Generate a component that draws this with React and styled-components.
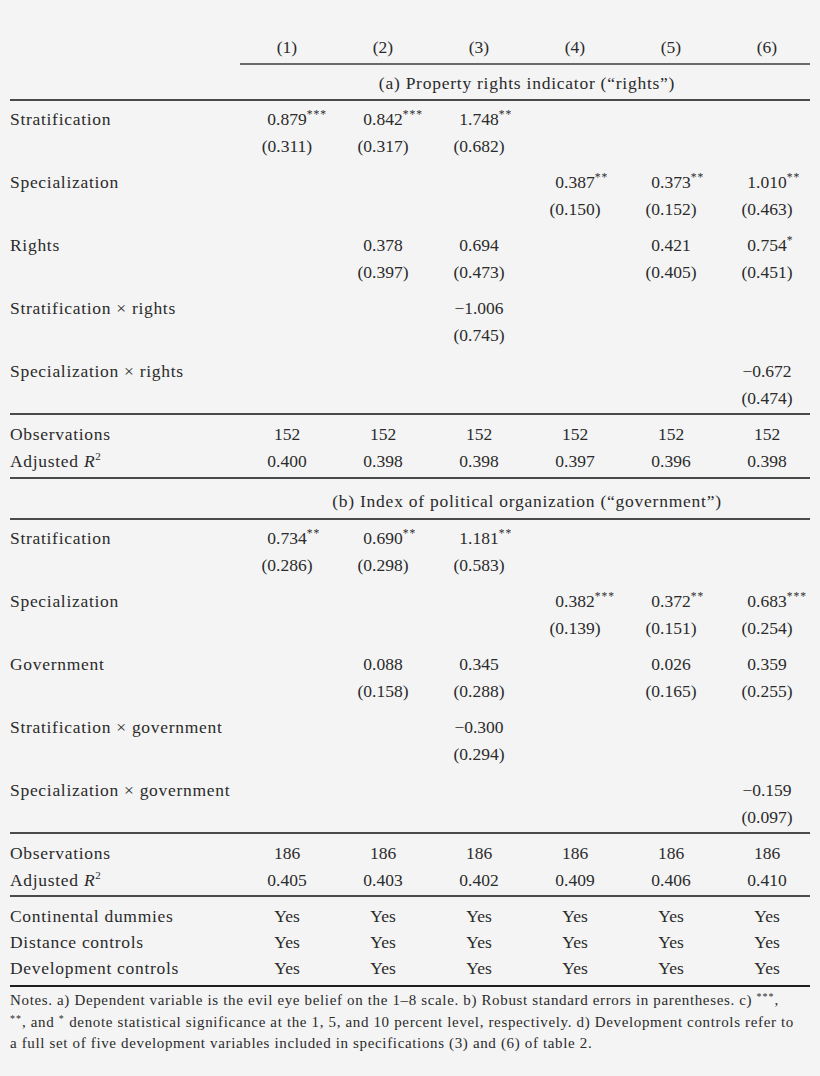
import React from "react";
import styled, { createGlobalStyle } from "styled-components";

const Global = createGlobalStyle`
  html, body { margin: 0; padding: 0; background: #f4f4f4; }
`;

const Page = styled.div`
  box-sizing: border-box;
  min-height: 1076px;
  width: 820px;
  padding: 34px 10px 0 10px;
  background: #f4f4f4;
  color: #2b2b2b;
  font-family: "Liberation Serif", "Times New Roman", serif;
  font-size: 17.5px;
`;

const Table = styled.div`
  width: 800px;
`;

const Grid = styled.div`
  display: grid;
  grid-template-columns: 229px repeat(6, 96px);
  height: ${(p) => p.$h || 27}px;
  line-height: ${(p) => p.$h || 27}px;
  white-space: nowrap;
`;

const Label = styled.div`
  letter-spacing: 0.7px;
`;

const Cell = styled.div`
  text-align: center;
`;

const Caption = styled.div`
  grid-column: 2 / -1;
  text-align: center;
  letter-spacing: 0.75px;
`;

const Rule = styled.div`
  height: 2px;
  margin-top: ${(p) => p.$mt || 0}px;
  margin-left: ${(p) => p.$indent || 0}px;
  background: ${(p) => (p.$dark ? "#1e1e1e" : p.$light ? "#6a6a6a" : "#4a4a4a")};
`;

const Section = styled.div`
  padding-top: ${(p) => p.$pt || 0}px;
`;

const Group = styled.div`
  & + & {
    margin-top: 9px;
  }
`;

const Stars = styled.span`
  display: inline-block;
  width: 0;
  overflow: visible;
  white-space: nowrap;
  font-size: 11.5px;
  letter-spacing: 1px;
  vertical-align: 7px;
  line-height: 1;
`;

const Italic = styled.span`
  font-style: italic;
`;

const Sup = styled.sup`
  font-size: 11px;
  line-height: 0;
  vertical-align: 7px;
`;

const Notes = styled.div`
  margin-top: 3px;
  font-size: 15px;
  line-height: 21.5px;
  letter-spacing: 0.65px;
  white-space: nowrap;
`;

const NoteLine = styled.div``;

const NoteStars = styled.span`
  font-size: 10px;
  letter-spacing: 1px;
  vertical-align: 5px;
  line-height: 0;
`;

function Value({ v }) {
  if (!v) return <Cell />;
  const m = v.match(/^([^*]*)(\**)$/);
  return (
    <Cell>
      {m[1]}
      {m[2] ? <Stars>{m[2]}</Stars> : null}
    </Cell>
  );
}

function Row({ label, values, h }) {
  return (
    <Grid $h={h}>
      <Label>{label}</Label>
      {values.map((v, i) => (
        <Value key={i} v={v} />
      ))}
    </Grid>
  );
}

function CoefGroup({ label, coef, se }) {
  return (
    <Group>
      <Row label={label} values={coef} />
      <Row label="" values={se} />
    </Group>
  );
}

const panelA = [
  {
    label: "Stratification",
    coef: ["0.879***", "0.842***", "1.748**", "", "", ""],
    se: ["(0.311)", "(0.317)", "(0.682)", "", "", ""],
  },
  {
    label: "Specialization",
    coef: ["", "", "", "0.387**", "0.373**", "1.010**"],
    se: ["", "", "", "(0.150)", "(0.152)", "(0.463)"],
  },
  {
    label: "Rights",
    coef: ["", "0.378", "0.694", "", "0.421", "0.754*"],
    se: ["", "(0.397)", "(0.473)", "", "(0.405)", "(0.451)"],
  },
  {
    label: "Stratification × rights",
    coef: ["", "", "−1.006", "", "", ""],
    se: ["", "", "(0.745)", "", "", ""],
  },
  {
    label: "Specialization × rights",
    coef: ["", "", "", "", "", "−0.672"],
    se: ["", "", "", "", "", "(0.474)"],
  },
];

const panelB = [
  {
    label: "Stratification",
    coef: ["0.734**", "0.690**", "1.181**", "", "", ""],
    se: ["(0.286)", "(0.298)", "(0.583)", "", "", ""],
  },
  {
    label: "Specialization",
    coef: ["", "", "", "0.382***", "0.372**", "0.683***"],
    se: ["", "", "", "(0.139)", "(0.151)", "(0.254)"],
  },
  {
    label: "Government",
    coef: ["", "0.088", "0.345", "", "0.026", "0.359"],
    se: ["", "(0.158)", "(0.288)", "", "(0.165)", "(0.255)"],
  },
  {
    label: "Stratification × government",
    coef: ["", "", "−0.300", "", "", ""],
    se: ["", "", "(0.294)", "", "", ""],
  },
  {
    label: "Specialization × government",
    coef: ["", "", "", "", "", "−0.159"],
    se: ["", "", "", "", "", "(0.097)"],
  },
];

const AdjR2 = (
  <>
    Adjusted <Italic>R</Italic>
    <Sup>2</Sup>
  </>
);

const yes = ["Yes", "Yes", "Yes", "Yes", "Yes", "Yes"];

export default function App() {
  return (
    <>
      <Global />
      <Page>
        <Table>
          <Row label="" values={["(1)", "(2)", "(3)", "(4)", "(5)", "(6)"]} />
          <Rule $mt={2} $indent={230} $light />
          <Section $pt={5}>
            <Grid>
              <Label />
              <Caption>(a) Property rights indicator (“rights”)</Caption>
            </Grid>
          </Section>
          <Rule $mt={2} />
          <Section $pt={5}>
            {panelA.map((g) => (
              <CoefGroup key={g.label} {...g} />
            ))}
          </Section>
          <Rule $mt={1} />
          <Section $pt={6}>
            <Row label="Observations" values={["152", "152", "152", "152", "152", "152"]} />
            <Row label={AdjR2} values={["0.400", "0.398", "0.398", "0.397", "0.396", "0.398"]} />
          </Section>
          <Rule $mt={2} />
          <Section $pt={9}>
            <Grid>
              <Label />
              <Caption>(b) Index of political organization (“government”)</Caption>
            </Grid>
          </Section>
          <Rule $mt={3} />
          <Section $pt={5}>
            {panelB.map((g) => (
              <CoefGroup key={g.label} {...g} />
            ))}
          </Section>
          <Rule $mt={1} />
          <Section $pt={6}>
            <Row label="Observations" values={["186", "186", "186", "186", "186", "186"]} />
            <Row label={AdjR2} values={["0.405", "0.403", "0.402", "0.409", "0.406", "0.410"]} />
          </Section>
          <Rule $mt={1} />
          <Section $pt={6}>
            <Row label="Continental dummies" values={yes} h={26} />
            <Row label="Distance controls" values={yes} h={26} />
            <Row label="Development controls" values={yes} h={26} />
          </Section>
          <Rule $mt={4} $dark />
          <Notes>
            <NoteLine>
              Notes. a) Dependent variable is the evil eye belief on the 1–8 scale. b) Robust
              standard errors in parentheses. c) <NoteStars>***</NoteStars>,
            </NoteLine>
            <NoteLine>
              <NoteStars>**</NoteStars>, and <NoteStars>*</NoteStars> denote statistical
              significance at the 1, 5, and 10 percent level, respectively. d) Development controls
              refer to
            </NoteLine>
            <NoteLine>
              a full set of five development variables included in specifications (3) and (6) of
              table 2.
            </NoteLine>
          </Notes>
        </Table>
      </Page>
    </>
  );
}
